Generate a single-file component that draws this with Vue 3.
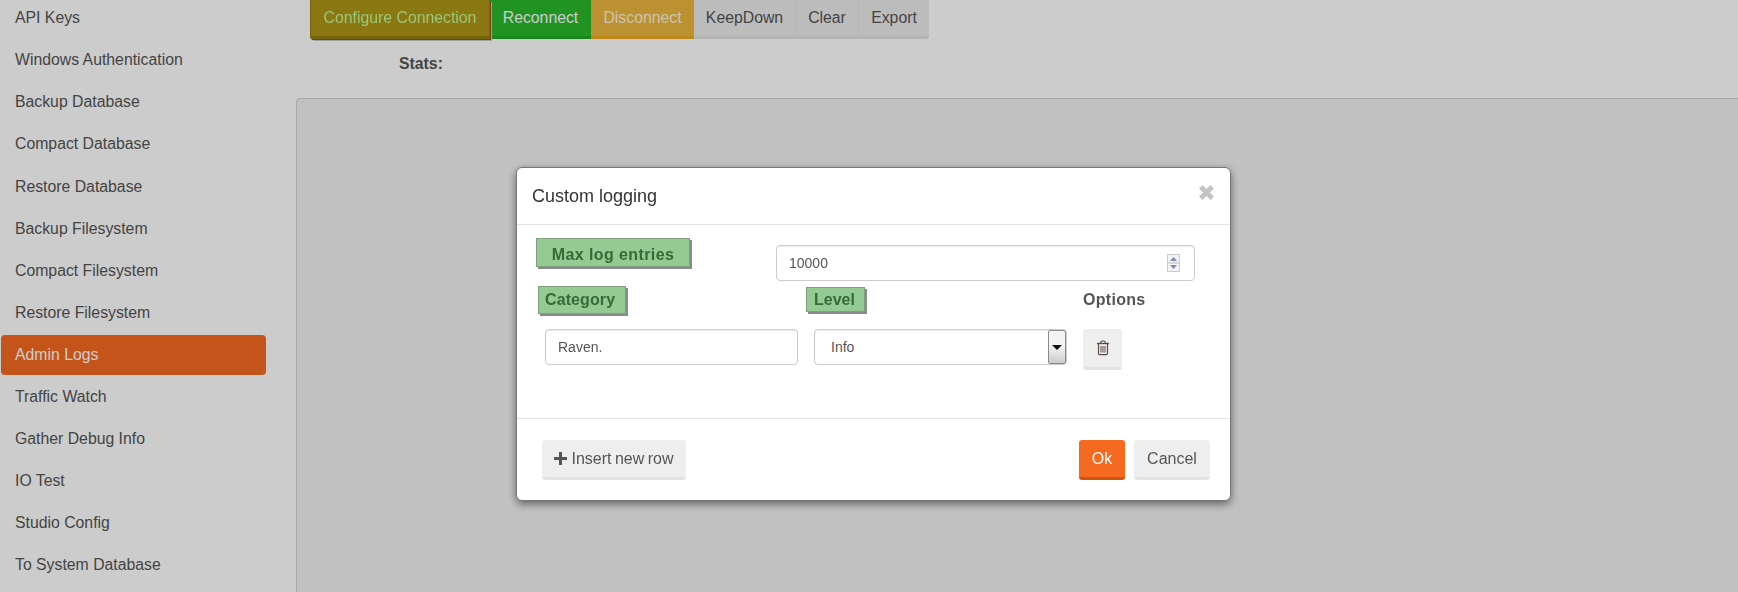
<script setup>
const menu = [
  'API Keys', 'Windows Authentication', 'Backup Database', 'Compact Database',
  'Restore Database', 'Backup Filesystem', 'Compact Filesystem', 'Restore Filesystem',
  'Admin Logs', 'Traffic Watch', 'Gather Debug Info', 'IO Test', 'Studio Config', 'To System Database'
]
const tools = [
  { label: 'Configure Connection', kind: 'configure' },
  { label: 'Reconnect', kind: 'reconnect' },
  { label: 'Disconnect', kind: 'disconnect' },
  { label: 'KeepDown', kind: 'plain' },
  { label: 'Clear', kind: 'plain' },
  { label: 'Export', kind: 'plain' }
]
</script>

<template>
  <div class="page">
    <ul class="sidebar">
      <li v-for="item in menu" :key="item" :class="{ active: item === 'Admin Logs' }">{{ item }}</li>
    </ul>
    <div class="main">
      <div class="toolbar">
        <button v-for="t in tools" :key="t.label" :class="['tool', t.kind]">{{ t.label }}</button>
      </div>
      <div class="stats">Stats:</div>
      <div class="panel"></div>
    </div>

    <div class="backdrop"></div>

    <div class="modal">
      <div class="modal-header">
        <h4>Custom logging</h4>
        <svg class="close" viewBox="1.500 1.500 13 13" width="15" height="15">
          <path d="M1.500 4.500 4.500 1.500 8 5 11.500 1.500 14.500 4.500 11 8 14.500 11.500 11.500 14.500 8 11 4.500 14.500 1.500 11.500 5 8Z" />
        </svg>
      </div>

      <div class="modal-body">
        <div class="max-row">
          <div class="tag tag-max">Max log entries</div>
          <div class="number-wrap">
            <input class="field" type="text" value="10000" />
            <svg class="spinner" viewBox="0 0 13 18" width="13" height="18">
              <rect x="0.500" y="0.500" width="12" height="17" fill="#f4f4f4" stroke="#ccc" />
              <path d="M0 9H13" stroke="#bbb" />
              <path d="M6.500 3 10 7H3Z" fill="#7f86b8" />
              <path d="M6.500 15 3 11H10Z" fill="#7f86b8" />
            </svg>
          </div>
        </div>

        <div class="grid">
          <div><span class="tag tag-cat">Category</span></div>
          <div><span class="tag tag-level">Level</span></div>
          <div class="options">Options</div>

          <div class="cell-cat"><input class="field" type="text" value="Raven." /></div>
          <div class="cell-level">
            <div class="select">
              <span>Info</span>
              <span class="arrow"></span>
            </div>
          </div>
          <div>
            <button class="btn trash">
              <svg viewBox="0 0 14 16" width="14" height="16" fill="none" stroke="#5a4a48">
                <path d="M1 3.500H13" stroke-width="1.400" />
                <path d="M4.800 3.500V2.200Q4.800 1 6 1H8Q9.200 1 9.200 2.200V3.500" stroke-width="1.100" />
                <path d="M2.500 3.500V13.500Q2.500 14.700 3.700 14.700H10.300Q11.500 14.700 11.500 13.500V3.500" stroke-width="1.200" />
                <path d="M5 6V12.500M7 6V12.500M9 6V12.500" stroke-width="1" />
              </svg>
            </button>
          </div>
        </div>
      </div>

      <div class="modal-footer">
        <button class="btn insert">
          <svg viewBox="0 0 13 13" width="13" height="13"><path d="M5 0H8V5H13V8H8V13H5V8H0V5H5Z" fill="#555" /></svg>
          <span>Insert new row</span>
        </button>
        <div class="footer-right">
          <button class="btn ok">Ok</button>
          <button class="btn cancel">Cancel</button>
        </div>
      </div>
    </div>
  </div>
</template>

<style>
* {
  box-sizing: border-box;
}
body {
  margin: 0;
  overflow: hidden;
  background: #fff;
}
</style>

<style scoped>
.page {
  display: flex;
  height: 592px;
  overflow: hidden;
  font-family: "Liberation Sans", Arial, sans-serif;
  font-size: 15.800px;
  color: #555;
}

.sidebar {
  width: 296px;
  flex: none;
  list-style: none;
  margin: -1.850px 0 0;
  padding: 0 30px 0 1px;
}

.sidebar li {
  height: 40px;
  line-height: 40px;
  margin-bottom: 2.100px;
  padding-left: 14px;
  border-radius: 4px;
  white-space: nowrap;
}

.sidebar li.active {
  background: #f56a20;
  color: #fff;
}

.main {
  flex: 1;
  min-width: 0;
  display: flex;
  flex-direction: column;
}

.toolbar {
  display: flex;
  margin-left: 14px;
  height: 39px;
}

.tool {
  font: inherit;
  height: 39px;
  padding: 0;
  border: 0;
  border-bottom: 3px solid #e0e0e0;
  border-right: 1px solid #e4e4e4;
  background: #ececec;
  color: #555;
}

.tool.configure {
  width: 180px;
  background: #8c7813;
  color: #98c878;
  border: 1px solid #75640c;
  border-bottom: 3px solid #75640c;
  border-top: 0;
  box-shadow: 1px 1px 0 #82391a, 2px 2px 0 #a0a0a0;
  position: relative;
  z-index: 1;
  border-radius: 0 0 0 2px;
}

.tool.reconnect {
  width: 101px;
  background: #28b82c;
  color: #fff;
  border-color: #22a826;
  border-right: 0;
}

.tool.disconnect {
  width: 103px;
  background: #ecb63f;
  color: #fff4dc;
  border-color: #eeaa1c;
  border-right: 0;
}

.tool.plain:nth-child(4) {
  width: 102px;
}

.tool.plain:nth-child(5) {
  width: 63px;
}

.tool.plain:nth-child(6) {
  width: 70px;
  border-right: 0;
  border-radius: 0 0 3px 0;
}

.stats {
  margin: 16px 0 0 103px;
  height: 17px;
  line-height: 17px;
  font-weight: bold;
}

.panel {
  flex: 1;
  margin-top: 26px;
  margin-bottom: -10px;
  margin-right: -10px;
  background: #f2f2f2;
  border: 1px solid #d2d2d2;
  border-radius: 4px 0 0 0;
}

.backdrop {
  position: fixed;
  inset: 0;
  background: rgba(0, 0, 0, 0.2);
}

.modal {
  position: fixed;
  left: 516px;
  top: 167px;
  width: 715px;
  height: 334px;
  display: flex;
  flex-direction: column;
  background: #fff;
  border: 1px solid #777;
  border-radius: 6px;
  box-shadow: 0 3px 9px rgba(0, 0, 0, 0.5);
  font-size: 14px;
}

.modal-header {
  height: 57px;
  flex: none;
  display: flex;
  align-items: center;
  justify-content: space-between;
  padding: 0 16px 0 15px;
  border-bottom: 1px solid #e5e5e5;
}

.modal-header h4 {
  margin: 0;
  font-size: 18px;
  font-weight: normal;
  color: #333;
}

.close {
  fill: #c4c4c4;
  margin-top: -7px;
}

.modal-body {
  flex: 1;
  padding: 13px 0 0 19px;
}

.max-row {
  display: flex;
  align-items: flex-start;
}

.tag {
  display: inline-block;
  background: #93cb93;
  color: #366a36;
  border: 1px solid #7f9f7f;
  box-shadow: 2px 2px 0 #8a8a8a;
  font-weight: bold;
  font-size: 16px;
}

.tag-max {
  width: 154px;
  height: 29px;
  line-height: 31px;
  text-align: center;
  letter-spacing: 0.400px;
}

.number-wrap {
  position: relative;
  width: 419px;
  margin: 7px 0 0 86px;
}

.field {
  display: block;
  width: 100%;
  height: 36px;
  padding: 0 12px;
  border: 1px solid #ccc;
  border-radius: 4px;
  box-shadow: inset 0 1px 1px rgba(0, 0, 0, 0.075);
  font: inherit;
  font-size: 14px;
  color: #555;
  background: #fff;
}

.spinner {
  position: absolute;
  top: 9px;
  right: 15px;
}

.grid {
  display: grid;
  grid-template-columns: 268px 277px 1fr;
  grid-template-rows: 43px auto;
  margin: 5px 0 0 2px;
}

.tag-cat {
  width: 88px;
  height: 28px;
  line-height: 26px;
  padding-left: 6px;
  letter-spacing: 0.100px;
}

.tag-level {
  width: 59px;
  height: 25px;
  line-height: 23px;
  padding-left: 7px;
  margin-top: 1px;
}

.options {
  font-weight: bold;
  font-size: 16px;
  letter-spacing: 0.300px;
  padding-top: 5px;
}

.cell-cat {
  padding: 0 8px 0 7px;
}

.cell-cat .field {
  width: 253px;
}

.cell-level {
  padding-left: 8px;
}

.select {
  width: 253px;
  height: 36px;
  position: relative;
  padding-left: 16px;
  line-height: 34px;
  border: 1px solid #ccc;
  border-radius: 4px;
  background: #fff;
  box-shadow: inset 0 1px 1px rgba(0, 0, 0, 0.075);
}

.arrow {
  position: absolute;
  top: 0;
  right: 0;
  bottom: 0;
  width: 18px;
  background: linear-gradient(#f4f4f4, #f4f4f4 45%, #ccc);
  border: 1px solid #8a8a8a;
  border-radius: 2px;
}

.arrow::after {
  content: '';
  position: absolute;
  left: 3px;
  top: 14px;
  border-left: 5px solid transparent;
  border-right: 5px solid transparent;
  border-top: 5px solid #111;
}

.btn {
  font: inherit;
  font-size: 16px;
  height: 40px;
  padding: 0;
  border: 0;
  border-bottom: 3px solid #e2e2e2;
  border-radius: 3px;
  background: #eee;
  color: #555;
}

.trash {
  width: 39px;
  height: 41px;
  display: flex;
  align-items: center;
  justify-content: center;
}

.modal-footer {
  height: 82px;
  flex: none;
  display: flex;
  justify-content: space-between;
  padding: 21px 20px 0 25px;
  border-top: 1px solid #e5e5e5;
}

.insert {
  width: 144px;
  display: flex;
  align-items: center;
  justify-content: center;
  gap: 4px;
  word-spacing: -1px;
}

.footer-right {
  display: flex;
  gap: 9px;
}

.ok {
  width: 46px;
  background: #f56a20;
  border-bottom-color: #d2530e;
  color: #fff;
}

.cancel {
  width: 76px;
}
</style>
